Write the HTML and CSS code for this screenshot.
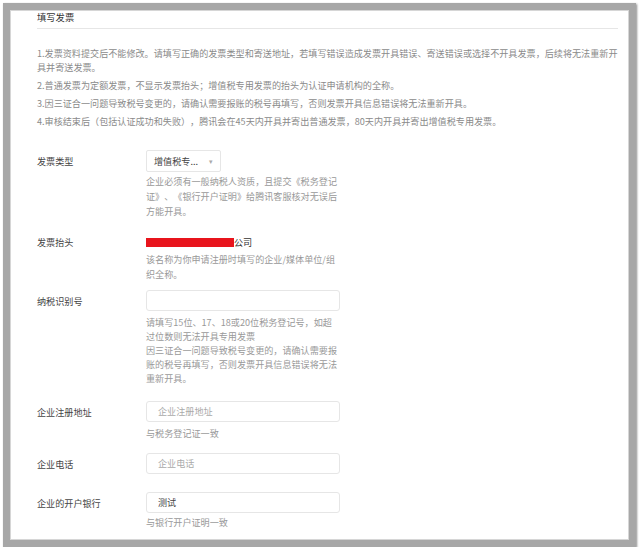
FILE: index.html
```html
<!DOCTYPE html>
<html lang="zh-CN">
<head>
<meta charset="utf-8">
<title>填写发票</title>
<link rel="stylesheet" href="styles.css">
</head>
<body>
<div class="frame">
  <div class="panel">
    <div class="title">填写发票</div>
    <div class="notes">
      <p>1.发票资料提交后不能修改。请填写正确的发票类型和寄送地址，若填写错误造成发票开具错误、寄送错误或选择不开具发票，后续将无法重新开具并寄送发票。</p>
      <p>2.普通发票为定额发票，不显示发票抬头；增值税专用发票的抬头为认证申请机构的全称。</p>
      <p>3.因三证合一问题导致税号变更的，请确认需要报账的税号再填写，否则发票开具信息错误将无法重新开具。</p>
      <p>4.审核结束后（包括认证成功和失败），腾讯会在45天内开具并寄出普通发票，80天内开具并寄出增值税专用发票。</p>
    </div>
    <div class="form">
      <div class="row row-type">
        <div class="label">发票类型</div>
        <div class="field">
          <div class="select"><span>增值税专...</span><span class="caret">▾</span></div>
          <div class="help help-first">企业必须有一般纳税人资质，且提交《税务登记证》、《银行开户证明》给腾讯客服核对无误后方能开具。</div>
        </div>
      </div>
      <div class="row row-head">
        <div class="label label-text">发票抬头</div>
        <div class="field">
          <div class="value"><span class="redact"></span>公司</div>
          <div class="help help-head">该名称为你申请注册时填写的企业/媒体单位/组织全称。</div>
        </div>
      </div>
      <div class="row row-tax">
        <div class="label">纳税识别号</div>
        <div class="field">
          <div class="input"></div>
          <div class="help help-tight">请填写15位、17、18或20位税务登记号，如超过位数则无法开具专用发票<br>因三证合一问题导致税号变更的，请确认需要报账的税号再填写，否则发票开具信息错误将无法重新开具。</div>
        </div>
      </div>
      <div class="row row-addr">
        <div class="label">企业注册地址</div>
        <div class="field">
          <div class="input placeholder">企业注册地址</div>
          <div class="help help-tight">与税务登记证一致</div>
        </div>
      </div>
      <div class="row row-phone">
        <div class="label">企业电话</div>
        <div class="field">
          <div class="input placeholder">企业电话</div>
        </div>
      </div>
      <div class="row row-bank">
        <div class="label">企业的开户银行</div>
        <div class="field">
          <div class="input filled">测试</div>
          <div class="help help-bank">与银行开户证明一致</div>
        </div>
      </div>
    </div>
  </div>
</div>
</body>
</html>
```

FILE: styles.css
```css
html, body {
  margin: 0;
  padding: 0;
  background: #ffffff;
}

body {
  width: 640px;
  height: 547px;
  overflow: hidden;
  font-family: "Noto Sans CJK SC", "Noto Sans", sans-serif;
  font-size: 9.1px;
  color: #333;
  text-spacing-trim: space-all;
}

.frame {
  margin: 3px 4px 0 3px;
  height: 530px;
  border: 7px solid #a7a7a7;
  box-shadow: 1px 1px 2px rgba(0, 0, 0, 0.45), inset 0 0 0 1px #d6d6d6;
  background: #fff;
}

.panel {
  padding: 1px 9px 0 27px;
}

.title {
  font-size: 9.3px;
  line-height: 13px;
  color: #333;
  padding-bottom: 4px;
  border-bottom: 1px solid #e6e6e6;
  margin-right: 2px;
}

.notes {
  margin-top: 17px;
  color: #8a8a8a;
}

.notes p {
  margin: 0 0 4px 0;
  line-height: 14px;
}

.form {
  margin-top: 22px;
}

.row {
  display: grid;
  grid-template-columns: 109px 194px;
}

.label {
  line-height: 22px;
  color: #444;
}

.label-text {
  line-height: 14px;
}

.select {
  box-sizing: border-box;
  width: 75px;
  height: 22px;
  border: 1px solid #e6e6e6;
  border-radius: 2px;
  display: flex;
  align-items: center;
  justify-content: space-between;
  padding: 0 7px 0 7px;
  color: #444;
}

.caret {
  color: #aaa;
  font-size: 7px;
}

.input {
  box-sizing: border-box;
  width: 194px;
  height: 21px;
  border: 1px solid #e6e6e6;
  border-radius: 3px;
  line-height: 19px;
  padding: 0 11px;
}

.placeholder {
  color: #aaa;
}

.filled {
  color: #444;
}

.value {
  line-height: 14px;
  height: 14px;
  display: flex;
  align-items: center;
  color: #333;
}

.redact {
  display: inline-block;
  width: 88px;
  height: 9px;
  background: #e8141c;
}

.help {
  color: #999;
  line-height: 14px;
}

.help-first {
  margin-top: 2px;
  line-height: 15px;
}

.help-head {
  margin-top: 3px;
  line-height: 15px;
}

.help-tight {
  margin-top: 4px;
}

.help-bank {
  margin-top: 2px;
}

.row-head { margin-top: 16px; }
.row-tax { margin-top: 8px; }
.row-addr { margin-top: 16px; }
.row-phone { margin-top: 13px; }
.row-bank { margin-top: 17px; }
```
